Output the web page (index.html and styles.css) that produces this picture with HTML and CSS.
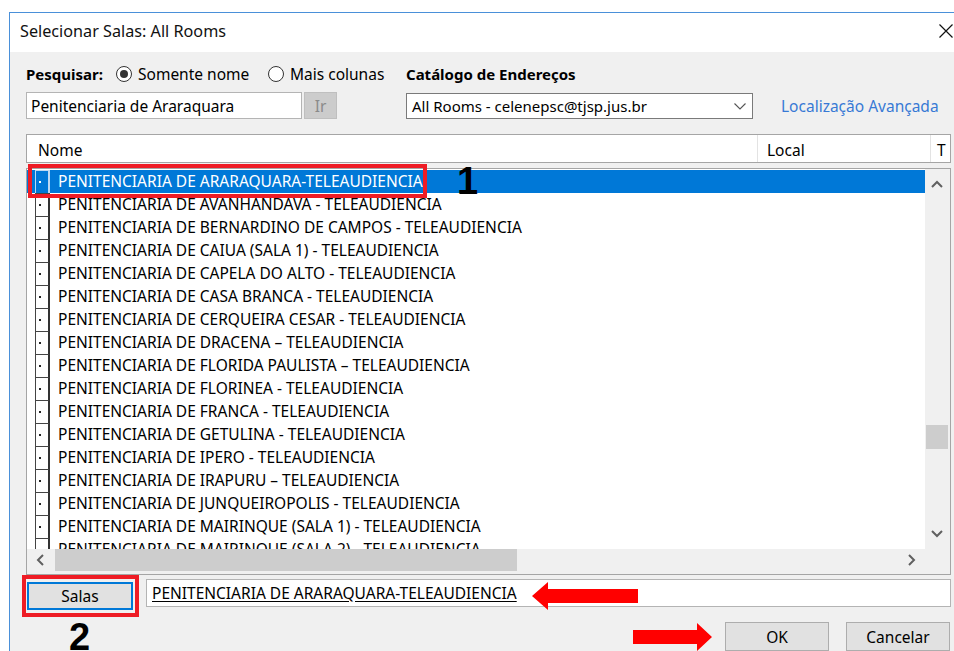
FILE: index.html
```
<!DOCTYPE html>
<html lang="pt-BR">
<head>
<meta charset="utf-8">
<title>Selecionar Salas: All Rooms</title>
<link rel="stylesheet" href="styles.css">
</head>
<body>
<div class="window">
  <div class="titlebar">
    <span class="title">Selecionar Salas: All Rooms</span>
    <svg class="close" width="14" height="14" viewBox="0 0 14 14"><path d="M0.5 0.5 L13.5 13.5 M13.5 0.5 L0.5 13.5" stroke="#111" stroke-width="1.2" fill="none"/></svg>
  </div>

  <div class="content">
    <div class="search">
      <div class="options">
        <span class="search-label">Pesquisar:</span>
        <label class="radio-opt first"><span class="radio checked"></span>Somente nome</label>
        <label class="radio-opt"><span class="radio"></span>Mais colunas</label>
      </div>
      <div class="catalog-label">Catálogo de Endereços</div>
      <div></div>

      <div class="query">
        <div class="textbox">Penitenciaria de Araraquara</div>
        <div class="btn-go">Ir</div>
      </div>
      <div class="select">
        <span>All Rooms - celenepsc@tjsp.jus.br</span>
        <svg class="chev" width="12" height="7" viewBox="0 0 12 7"><path d="M0.5 0.5 L6 6 L11.5 0.5" stroke="#555" stroke-width="1.1" fill="none"/></svg>
      </div>
      <a class="advanced">Localização Avançada</a>
    </div>

    <div class="list-header">
      <div class="col col-name">Nome</div>
      <div class="col col-local">Local</div>
      <div class="col col-type">T</div>
    </div>

    <div class="list">
      <div class="list-main">
        <div class="rows">
          <div class="row selected"><span class="ico"></span><span class="name">PENITENCIARIA DE ARARAQUARA-TELEAUDIENCIA</span></div>
          <div class="row"><span class="ico"></span><span class="name">PENITENCIARIA DE AVANHANDAVA - TELEAUDIENCIA</span></div>
          <div class="row"><span class="ico"></span><span class="name">PENITENCIARIA DE BERNARDINO DE CAMPOS - TELEAUDIENCIA</span></div>
          <div class="row"><span class="ico"></span><span class="name">PENITENCIARIA DE CAIUA (SALA 1) - TELEAUDIENCIA</span></div>
          <div class="row"><span class="ico"></span><span class="name">PENITENCIARIA DE CAPELA DO ALTO - TELEAUDIENCIA</span></div>
          <div class="row"><span class="ico"></span><span class="name">PENITENCIARIA DE CASA BRANCA - TELEAUDIENCIA</span></div>
          <div class="row"><span class="ico"></span><span class="name">PENITENCIARIA DE CERQUEIRA CESAR - TELEAUDIENCIA</span></div>
          <div class="row"><span class="ico"></span><span class="name">PENITENCIARIA DE DRACENA – TELEAUDIENCIA</span></div>
          <div class="row"><span class="ico"></span><span class="name">PENITENCIARIA DE FLORIDA PAULISTA – TELEAUDIENCIA</span></div>
          <div class="row"><span class="ico"></span><span class="name">PENITENCIARIA DE FLORINEA - TELEAUDIENCIA</span></div>
          <div class="row"><span class="ico"></span><span class="name">PENITENCIARIA DE FRANCA - TELEAUDIENCIA</span></div>
          <div class="row"><span class="ico"></span><span class="name">PENITENCIARIA DE GETULINA - TELEAUDIENCIA</span></div>
          <div class="row"><span class="ico"></span><span class="name">PENITENCIARIA DE IPERO - TELEAUDIENCIA</span></div>
          <div class="row"><span class="ico"></span><span class="name">PENITENCIARIA DE IRAPURU – TELEAUDIENCIA</span></div>
          <div class="row"><span class="ico"></span><span class="name">PENITENCIARIA DE JUNQUEIROPOLIS - TELEAUDIENCIA</span></div>
          <div class="row"><span class="ico"></span><span class="name">PENITENCIARIA DE MAIRINQUE (SALA 1) - TELEAUDIENCIA</span></div>
          <div class="row"><span class="ico"></span><span class="name">PENITENCIARIA DE MAIRINQUE (SALA 2) - TELEAUDIENCIA</span></div>
        </div>
        <div class="vscroll">
          <svg class="arrow" width="12" height="8" viewBox="0 0 12 8"><path d="M1 7 L6 2 L11 7" stroke="#606060" stroke-width="2" fill="none"/></svg>
          <div class="vtrack"><div class="vthumb"></div></div>
          <svg class="arrow" width="12" height="8" viewBox="0 0 12 8"><path d="M1 1 L6 6 L11 1" stroke="#606060" stroke-width="2" fill="none"/></svg>
        </div>
      </div>
      <div class="hscroll">
        <svg class="harrow" width="8" height="12" viewBox="0 0 8 12"><path d="M7 1 L2 6 L7 11" stroke="#606060" stroke-width="2" fill="none"/></svg>
        <div class="htrack"><div class="hthumb"></div></div>
        <svg class="harrow" width="8" height="12" viewBox="0 0 8 12"><path d="M1 1 L6 6 L1 11" stroke="#606060" stroke-width="2" fill="none"/></svg>
        <div class="corner"></div>
      </div>
    </div>

    <div class="picked">
      <div class="btn btn-rooms">Salas</div>
      <div class="picked-field"><span class="picked-name">PENITENCIARIA DE ARARAQUARA-TELEAUDIENCIA</span></div>
    </div>

    <div class="actions">
      <div class="btn btn-action">OK</div>
      <div class="btn btn-action">Cancelar</div>
    </div>
  </div>

  <!-- callouts drawn over the dialog -->
  <div class="mark mark-row"></div>
  <div class="step step-1">1</div>
  <div class="mark mark-rooms"></div>
  <div class="step step-2">2</div>
  <svg class="pointer pointer-left" width="106" height="28" viewBox="0 0 106 28"><path d="M0 14 L16 0 L16 7 L106 7 L106 21 L16 21 L16 28 Z" fill="#f00"/></svg>
  <svg class="pointer pointer-right" width="79" height="29" viewBox="0 0 79 29"><path d="M0 7 L64 7 L64 0 L79 14 L64 28 L64 21 L0 21 Z" fill="#f00"/></svg>
</div>
</body>
</html>
```
FILE: styles.css
```
html, body {
  margin: 0;
  padding: 0;
  background: #ffffff;
  overflow: hidden;
}

body {
  font-family: "Noto Sans", "Open Sans", sans-serif;
  font-size: 15.5px;
  color: #000;
}

.window {
  position: relative;
  margin: 12px 0 0 9px;
  width: 945px;
  height: 660px;
  border-top: 1px solid #4a90d9;
  border-left: 1px solid #4a90d9;
  background: #f0f0f0;
}

/* title bar */
.titlebar {
  height: 39px;
  background: #fff;
  display: flex;
  align-items: center;
  padding-left: 10px;
}
.title {
  font-size: 16.2px;
  color: #111;
  margin-top: -3px;
}
.close {
  margin-left: auto;
  margin-right: 2px;
  margin-top: -4px;
}

.content {
  width: 925px;
  padding: 12px 0 0 16px;
}

/* search area */
.search {
  display: grid;
  grid-template-columns: 380px 347px 1fr;
  grid-template-rows: 20px 27px;
  row-gap: 8px;
  align-items: center;
}
.options {
  display: flex;
  align-items: center;
}
.search-label {
  width: 90px;
  font-weight: 700;
  font-size: 15px;
}
.radio-opt {
  display: flex;
  align-items: center;
  gap: 6px;
}
.radio-opt.first {
  width: 152px;
}
.radio {
  width: 16px;
  height: 16px;
  box-sizing: border-box;
  border: 1px solid #333;
  border-radius: 50%;
  background: #fff;
  display: flex;
  align-items: center;
  justify-content: center;
}
.radio.checked::after {
  content: "";
  width: 8px;
  height: 8px;
  border-radius: 50%;
  background: #333;
}
.catalog-label {
  font-weight: 700;
  font-size: 15px;
}

.query {
  display: flex;
  gap: 2px;
  height: 27px;
}
.textbox {
  width: 276px;
  box-sizing: border-box;
  height: 27px;
  border: 1px solid #b4b4b4;
  background: #fff;
  padding-left: 4px;
  display: flex;
  align-items: center;
}
.btn-go {
  width: 33px;
  height: 27px;
  box-sizing: border-box;
  background: #cccccc;
  border: 1px solid #bfbfbf;
  color: #8a8a8a;
  display: flex;
  align-items: center;
  justify-content: center;
}

.select {
  height: 26px;
  margin-top: 1px;
  box-sizing: border-box;
  border: 1px solid #7a7a7a;
  background: #fff;
  padding: 0 6px 0 5px;
  display: flex;
  align-items: center;
  justify-content: space-between;
  font-size: 15px;
}
.advanced {
  margin-left: 28px;
  color: #3779d5;
  margin-top: 1px;
  white-space: nowrap;
}

/* column header */
.list-header {
  margin-top: 15px;
  height: 29px;
  box-sizing: border-box;
  border: 1px solid #a5a5a5;
  background: #fff;
  display: flex;
  align-items: center;
}
.col {
  height: 100%;
  display: flex;
  align-items: center;
  box-sizing: border-box;
  padding-top: 2px;
}
.col-name {
  width: 731px;
  padding-left: 11px;
  border-right: 1px solid #e3e3e3;
}
.col-local {
  width: 173px;
  padding-left: 9px;
  border-right: 1px solid #e3e3e3;
}
.col-type {
  padding-left: 6px;
}

/* result list */
.list {
  margin-top: 5px;
  height: 407px;
  box-sizing: border-box;
  border: 1px solid #a5a5a5;
  background: #f0f0f0;
  padding-bottom: 3px;
  display: flex;
  flex-direction: column;
}
.list-main {
  display: flex;
  height: 380px;
}
.rows {
  flex: 1;
  background: #fff;
  overflow: hidden;
  padding-top: 1px;
}
.row {
  height: 23px;
  display: flex;
  align-items: center;
  white-space: nowrap;
  padding-left: 8px;
  gap: 8px;
}
.row .name {
  margin-top: -2px;
}
.row.selected {
  background: #0078d7;
  color: #fff;
}
.ico {
  width: 15px;
  height: 23px;
  box-sizing: border-box;
  border-top: 1px solid #444;
  border-left: 1px solid #444;
  border-right: 2px solid #333;
  background: #fff;
  position: relative;
  flex: none;
}
.ico::after {
  content: "";
  position: absolute;
  left: 3px;
  top: 10px;
  width: 2px;
  height: 2px;
  background: #222;
}
.row.selected .ico {
  background: #0078d7;
  border-color: #bcd8f2;
}
.row.selected .ico::after {
  background: #fff;
}

.vscroll {
  width: 23px;
  margin-right: 2px;
  display: flex;
  flex-direction: column;
  align-items: center;
  background: #f0f0f0;
}
.vscroll .arrow {
  margin: 11px 0;
  flex: none;
}
.vtrack {
  flex: 1;
  width: 100%;
  position: relative;
}
.vthumb {
  position: absolute;
  left: 1px;
  right: 0;
  top: 226px;
  height: 24px;
  background: #cdcdcd;
}

.hscroll {
  height: 22px;
  display: flex;
  align-items: center;
}
.harrow {
  flex: none;
  margin: 0 9px 0 9px;
}
.htrack {
  flex: 1;
  height: 100%;
  position: relative;
}
.hthumb {
  position: absolute;
  left: 2px;
  width: 462px;
  top: 0;
  bottom: 0;
  background: #cdcdcd;
}
.corner {
  width: 25px;
  height: 100%;
}

/* selected rooms row */
.picked {
  display: flex;
  align-items: flex-start;
  margin-top: 4px;
  gap: 13px;
}
.btn {
  box-sizing: border-box;
  background: #e1e1e1;
  border: 1px solid #adadad;
  display: flex;
  align-items: center;
  justify-content: center;
}
.btn-rooms {
  width: 106px;
  height: 28px;
  margin: 3px 0 0 1px;
  border: 2px solid #0078d7;
}
.picked-field {
  flex: 1;
  height: 28px;
  box-sizing: border-box;
  border: 1px solid #b4b4b4;
  background: #fff;
  display: flex;
  align-items: center;
  padding-left: 5px;
}
.picked-name {
  text-decoration: underline;
  text-underline-offset: 2px;
}

.actions {
  display: flex;
  justify-content: flex-end;
  gap: 17px;
  margin-top: 12px;
  padding-right: 1px;
}
.btn-action {
  width: 104px;
  height: 29px;
}

/* callouts */
.mark {
  position: absolute;
  box-sizing: border-box;
  border: 4px solid #ee1c25;
}
.mark-row {
  left: 18px;
  top: 151px;
  width: 399px;
  height: 34px;
}
.mark-rooms {
  left: 12px;
  top: 562px;
  width: 117px;
  height: 42px;
}
.step {
  position: absolute;
  font-family: "Liberation Sans", Arial, sans-serif;
  font-weight: 700;
  font-size: 38px;
  line-height: 1;
  color: #000;
}
.step-1 {
  left: 447px;
  top: 149px;
}
.step-2 {
  left: 59px;
  top: 605px;
}
.pointer {
  position: absolute;
}
.pointer-left {
  left: 522px;
  top: 569px;
}
.pointer-right {
  left: 623px;
  top: 610px;
}
```
